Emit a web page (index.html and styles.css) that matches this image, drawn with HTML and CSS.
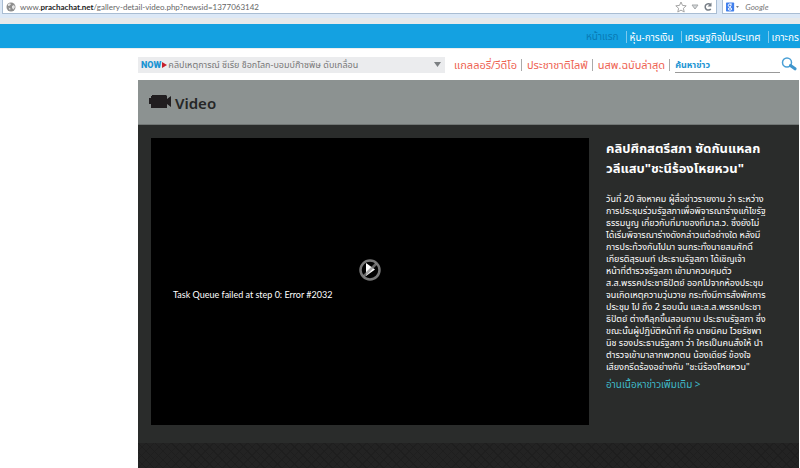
FILE: index.html
```
<!DOCTYPE html>
<html lang="th">
<head>
<meta charset="utf-8">
<meta name="viewport" content="width=device-width, initial-scale=1">
<title>Video</title>
<link rel="stylesheet" href="styles.css">
</head>
<body>
<div class="browser">
  <div class="field address">
    <svg class="globe" width="10" height="10" viewBox="0 0 10 10" aria-hidden="true"><circle cx="5" cy="5" r="4.5" fill="#8d8d8d"/><path d="M2 2l2-.8 1 1-1.500 1.500L2 4zM6 4l2-1 1 2-1.500 2.500L6 6zM2.500 5.500l2 1-.5 2z" fill="#e4e4e4"/></svg>
    <div class="url" role="textbox" contenteditable="true" spellcheck="false" aria-label="Address">www.<b>prachachat.net</b>/gallery-detail-video.php?newsid=1377063142</div>
    <button class="tool" aria-label="Bookmark"><svg width="12" height="12" viewBox="0 0 12 12"><path d="M6 1l1.500 3.400 3.700.4-2.800 2.500.8 3.700L6 9.100 2.800 11l.8-3.700L.8 4.800l3.700-.4z" fill="#fff" stroke="#a5a5a5"/></svg></button>
    <button class="tool" aria-label="History"><svg width="8" height="12" viewBox="0 0 8 12"><path d="M1 4h6L4 8z" fill="#d5d8da" stroke="#a5a8aa"/></svg></button>
    <button class="tool" aria-label="Reload"><svg width="10" height="12" viewBox="0 0 10 12"><path d="M7.500 3.500A3.200 3.200 0 1 0 7.800 8" fill="none" stroke="#777e86" stroke-width="1.500"/><path d="M8.500 1.500v4h-4z" fill="#777e86"/></svg></button>
  </div>
  <div class="field engine">
    <button class="tool picker" aria-label="Search engine"><svg width="18" height="12" viewBox="0 0 18 12"><rect width="11" height="12" rx="1" fill="#4280ec"/><g fill="none" stroke="#fff" stroke-width="1.300"><circle cx="5" cy="3.800" r="1.900"/><path d="M5 2h3M6.200 5.300c-2 1-.7 1.400.3 1.900"/><ellipse cx="5.400" cy="8.700" rx="2.300" ry="1.600"/></g><path d="M13.500 5h4l-2 2z" fill="#555"/></svg></button>
    <input class="engine-input" type="text" placeholder="Google" aria-label="Search with Google">
  </div>
</div>

<nav class="topnav">
  <a class="current" href="#">หน้าแรก</a>
  <a href="#">หุ้น-การเงิน</a>
  <a href="#">เศรษฐกิจในประเทศ</a>
  <a href="#">เกาะกร</a>
</nav>

<main class="page">
  <div class="subbar">
    <div class="ticker">
      <label for="news">NOW</label>
      <svg width="5" height="6" viewBox="0 0 5 6" aria-hidden="true"><path d="M0 0l5 3-5 3z" fill="#c5202c"/></svg>
      <select id="news"><option>คลิปเหตุการณ์ ซีเรีย ช็อกโลก-บอมบ์ก๊าซพิษ ดับเกลื่อน</option></select>
      <svg width="7" height="5" viewBox="0 0 7 5" aria-hidden="true"><path d="M0 0h7L3.500 5z" fill="#7b7f82"/></svg>
    </div>
    <nav class="sections">
      <a href="#">แกลลอรี่/วีดีโอ</a>
      <a href="#">ประชาชาติไลฟ์</a>
      <a href="#">นสพ.ฉบับล่าสุด</a>
    </nav>
    <form class="search">
      <input type="text" placeholder="ค้นหาข่าว" aria-label="ค้นหาข่าว">
      <button class="tool" type="button" aria-label="ค้นหา"><svg width="16" height="14" viewBox="0 0 16 14"><circle cx="6" cy="5.500" r="4.500" fill="none" stroke="#4aa0d6" stroke-width="1.500"/><path d="M9.500 8.500l4.500 3.300" stroke="#3f96cd" stroke-width="3" stroke-linecap="round"/></svg></button>
    </form>
  </div>

  <header class="heading">
    <svg width="22" height="14" viewBox="0 0 22 14" aria-hidden="true"><path d="M2 1h1V0h14l1 1v3l4-3v11l-4-3v4H2v-4H0V3h2z" fill="#211e20"/></svg>
    <h1>Video</h1>
  </header>

  <section class="feature">
    <div class="player">
      <button class="play" aria-label="Play"><svg width="24" height="24" viewBox="0 0 24 24"><path d="M8 5v13l9-6.500z" fill="#fff"/><circle cx="12" cy="12" r="9.500" fill="none" stroke="#777" stroke-width="2.500"/><path d="M5.500 18.500l13-13" stroke="#888" stroke-opacity=".75" stroke-width="2.500"/></svg></button>
      <p>Task Queue failed at step 0: Error #2032</p>
    </div>
    <article class="story">
      <h2>คลิปศึกสตรีสภา ซัดกันแหลก<br>วลีแสบ"ชะนีร้องโหยหวน"</h2>
      <p>วันที่ 20 สิงหาคม ผู้สื่อข่าวรายงาน ว่า ระหว่าง<br>การประชุมร่วมรัฐสภาเพื่อพิจารณาร่างแก้ไขรัฐ<br>ธรรมนูญ เกี่ยวกับที่มาของที่มาส.ว. ซึ่งยังไม่<br>ได้เริ่มพิจารณาร่างดังกล่าวแต่อย่างใด หลังมี<br>การประท้วงกันไปมา จนกระทั่งนายสมศักดิ์<br>เกียรติสุรนนท์ ประธานรัฐสภา ได้เชิญเจ้า<br>หน้าที่ตำรวจรัฐสภา เข้ามาควบคุมตัว<br>ส.ส.พรรคประชาธิปัตย์ ออกไปจากห้องประชุม<br>จนเกิดเหตุความวุ่นวาย กระทั่งมีการสั่งพักการ<br>ประชุม ไป ถึง 2 รอบนั้น และส.ส.พรรคประชา<br>ธิปัตย์ ต่างก็ลุกขึ้นสอบถาม ประธานรัฐสภา ซึ่ง<br>ขณะนั้นผู้ปฏิบัติหน้าที่ คือ นายนิคม ไวยรัชพา<br>นิช รองประธานรัฐสภา ว่า ใครเป็นคนสั่งให้ นำ<br>ตำรวจเข้ามาลากพวกตน น้องเดียร์ ข้องใจ<br>เสียงกรีดร้องอย่างกับ "ชะนีร้องโหยหวน"</p>
      <a href="#">อ่านเนื้อหาข่าวเพิ่มเติม &gt;</a>
    </article>
  </section>
  <footer class="pattern"></footer>
</main>
</body>
</html>
```
FILE: styles.css
```
* {
  box-sizing: border-box;
}

body {
  display: flex;
  flex-direction: column;
  min-height: 100vh;
  margin: 0;
  background: #fff;
  color: #fff;
  font-family: "Noto Sans", "Noto Sans Thai", "Liberation Sans", sans-serif;
  white-space: nowrap;
}

a {
  color: inherit;
  text-decoration: none;
}

h1,
h2,
p {
  margin: 0;
}

input,
select,
button {
  min-width: 0;
  padding: 0;
  border: 0;
  outline: 0;
  background: transparent;
  font: inherit;
}

button {
  display: flex;
}

/* Browser toolbar */
.browser {
  display: flex;
  gap: 5px;
  height: 24px;
  padding: 0 0 6px 2px;
  background: linear-gradient(#dce8f6 18px, #e7e9ea 18px);
}

.field {
  display: flex;
  align-items: center;
  height: 14px;
  background: #fff;
  border: 1px solid #a9bdd3;
  border-top: 0;
}

.address {
  flex: 1;
  gap: 4px;
  padding: 0 3px;
}

.url {
  flex: 1;
  color: #666;
  font-family: Lato, sans-serif;
  font-size: 8px;
  line-height: 12px;
}

.url b {
  color: #222;
}

.engine {
  width: 78px;
  gap: 6px;
  padding-left: 3px;
  border-right: 0;
}

.engine-input {
  width: 100%;
  color: #777;
  font-family: Lato, sans-serif;
  font-size: 8px;
  font-style: italic;
  line-height: 12px;
}

/* Site navigation */
.topnav {
  display: flex;
  align-items: center;
  height: 24px;
  padding: 2px 0 0 586px;
  background: #14a1e1;
  font-size: 10px;
}

.topnav a + a {
  margin-left: 7px;
  padding-left: 3px;
  border-left: 1px solid #7cc9ee;
  line-height: 12px;
}

.topnav .current {
  color: #087ab5;
}

.page {
  display: flex;
  flex: 1;
  flex-direction: column;
  padding: 0 1px 0 138px;
  border-top: 1px solid #eee;
}

.subbar {
  display: flex;
  align-items: center;
  height: 31px;
  padding-right: 2px;
}

.ticker {
  display: flex;
  align-items: center;
  flex: 0 0 307px;
  gap: 1px;
  height: 16px;
  padding: 0 4px 0 3px;
  background: #ebecee;
  color: #1d95d3;
  font-size: 9px;
}

.ticker label {
  font-family: Roboto, sans-serif;
  font-weight: 900;
}

.ticker select {
  flex: 1;
  appearance: none;
  color: #777;
}

.sections {
  display: flex;
  align-items: center;
  margin-left: 9px;
  color: #ee6352;
  font-size: 11px;
}

.sections a {
  padding-right: 4px;
  border-right: 1px solid #aaa;
  line-height: 12px;
}

.sections a + a {
  padding-left: 5px;
}

.search {
  display: flex;
  flex: 1;
  gap: 1px;
  min-width: 0;
  margin-left: 5px;
}

.search input {
  flex: 1;
  height: 16px;
  border-bottom: 1px solid #999;
  font-size: 9px;
  font-weight: 700;
}

.search input::placeholder {
  color: #1d95d3;
  opacity: 1;
}

.engine-input::placeholder {
  color: #777;
  opacity: 1;
}

/* Video feature */
.heading {
  display: flex;
  align-items: center;
  gap: 4px;
  height: 45px;
  padding-left: 11px;
  background: #8c9291;
  border-bottom: 1px solid #717675;
  color: #252626;
}

.heading h1 {
  padding-top: 2px;
  font-family: "Noto Sans", sans-serif;
  font-size: 15px;
  font-weight: 600;
}

.feature {
  display: grid;
  grid-template-columns: minmax(0, 1fr) 176px;
  gap: 17px;
  padding: 13px 17px 18px 13px;
  background: #2a2c2b;
}

.player {
  display: flex;
  flex-direction: column;
  align-items: center;
  height: 287px;
  padding-top: 120px;
  background: #000;
}

.play {
  border-radius: 50%;
}

.player p {
  align-self: flex-start;
  margin: 7px 0 0 22px;
  font-family: Lato, sans-serif;
  font-size: 9px;
  line-height: 12px;
}

.story h2 {
  font-size: 13px;
  line-height: 20px;
}

.story p {
  margin-top: 15px;
  font-size: 9px;
  line-height: 12px;
}

.story a {
  display: block;
  margin-top: 4px;
  color: #3fb9c8;
  font-size: 10px;
  line-height: 14px;
}

.pattern {
  flex: 1;
  background:
    repeating-linear-gradient(45deg, transparent 0 5px, #1e1e1e 5px 6px),
    repeating-linear-gradient(135deg, #232323 0 5px, #1f1f1f 5px 6px);
}
```
